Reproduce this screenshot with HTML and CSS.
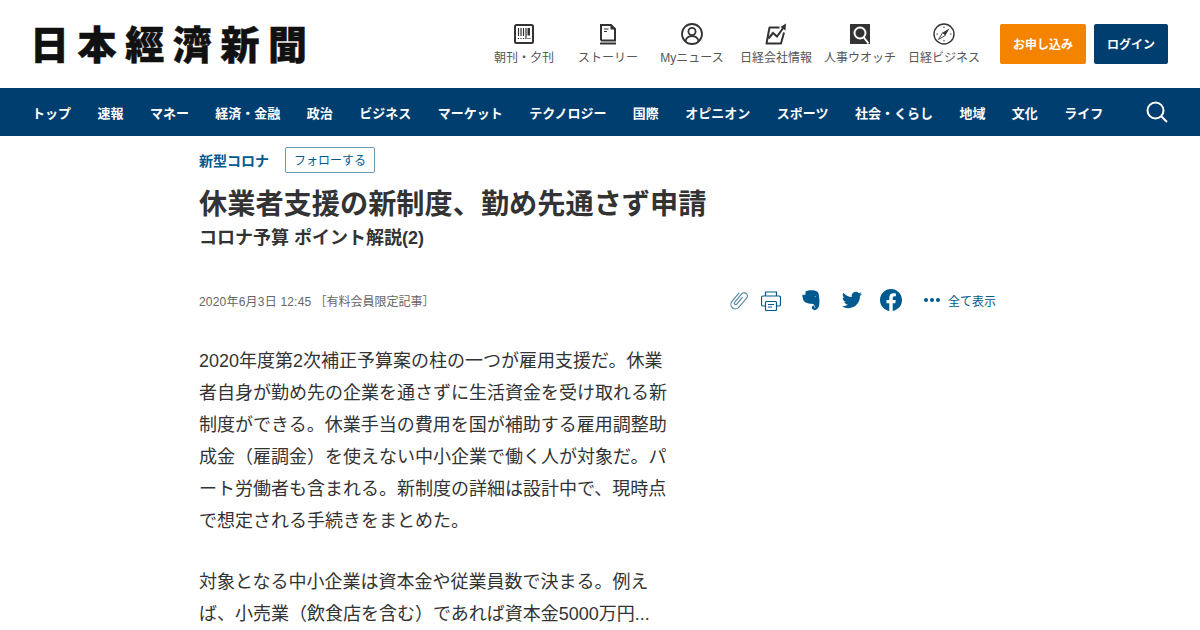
FILE: index.html
```html
<!DOCTYPE html>
<html lang="ja">
<head>
    <meta charset="UTF-8">
    <title>休業者支援の新制度、勤め先通さず申請</title>
    <link rel="stylesheet" href="styles.css">
</head>
<body>
    <header class="site-header">
        <a class="logo" href="#">日本經濟新聞</a>
        <ul class="service-list">
            <li class="service-item">
                <svg class="service-icon" viewBox="0 0 22 22"><rect x="2" y="2" width="18" height="18" rx="1.500" fill="none" stroke="#333" stroke-width="2"/><path d="M5.500 5v8M8 5v8M10.500 5v8M13 5v11M5.500 15v1M8 15v1M10.500 15v1M15 15v1M17 15v1" stroke="#333" stroke-width="1.200"/><rect x="14.500" y="5" width="2.500" height="7.500" fill="#333"/></svg>
                <span>朝刊・夕刊</span>
            </li>
            <li class="service-item">
                <svg class="service-icon" viewBox="0 0 22 22"><path d="M4 17.500V2h10l4 4v11.500H4" fill="none" stroke="#333" stroke-width="2"/><path d="M3 20.500h16" stroke="#333" stroke-width="2"/><path d="M13.500 1.500l5 5h-5z" fill="#333"/><path d="M7 6h4.500M7 8.500h3" stroke="#333" stroke-width="1.200"/></svg>
                <span>ストーリー</span>
            </li>
            <li class="service-item">
                <svg class="service-icon" viewBox="0 0 22 22"><circle cx="11" cy="11" r="10" fill="none" stroke="#333" stroke-width="1.800"/><circle cx="11" cy="8.500" r="3.600" fill="none" stroke="#333" stroke-width="1.800"/><path d="M4.500 18c1-3.500 3.500-4.800 6.500-4.800s5.500 1.300 6.500 4.800" fill="none" stroke="#333" stroke-width="1.800"/></svg>
                <span>Myニュース</span>
            </li>
            <li class="service-item">
                <svg class="service-icon" viewBox="0 0 22 22"><path d="M14.500 4.500H4.500L1.500 20.500h14.500l3-11" fill="none" stroke="#333" stroke-width="2" stroke-linejoin="round"/><path d="M3.500 15.500l4.500-5.500 4 3.500 6.500-9" fill="none" stroke="#333" stroke-width="2"/><path d="M21 .500l-.5 7-5-3.500z" fill="#333"/></svg>
                <span>日経会社情報</span>
            </li>
            <li class="service-item">
                <svg class="service-icon" viewBox="0 0 22 22"><rect x="1" y="1" width="20" height="20" fill="#333"/><circle cx="11" cy="10" r="5.500" fill="none" stroke="#fff" stroke-width="2"/><path d="M14.500 14l5 6.500" stroke="#fff" stroke-width="2"/></svg>
                <span>人事ウオッチ</span>
            </li>
            <li class="service-item">
                <svg class="service-icon" viewBox="0 0 22 22"><circle cx="11" cy="11" r="10" fill="none" stroke="#333" stroke-width="1.400"/><path d="M16.500 5.500l-4 6.800-2.800-2.800z" fill="#333"/><path d="M5.500 16.500l4.200-7 2.800 2.800z" fill="none" stroke="#333" stroke-width=".9"/><path d="M11 3.500v1.500M11 17v1.500M3.500 11H5M17 11h1.500" stroke="#333"/></svg>
                <span>日経ビジネス</span>
            </li>
        </ul>
        <div class="header-buttons">
            <a class="btn btn-apply" href="#">お申し込み</a>
            <a class="btn btn-login" href="#">ログイン</a>
        </div>
    </header>

    <nav class="global-nav">
        <ul class="nav-list">
            <li>トップ</li>
            <li>速報</li>
            <li>マネー</li>
            <li>経済・金融</li>
            <li>政治</li>
            <li>ビジネス</li>
            <li>マーケット</li>
            <li>テクノロジー</li>
            <li>国際</li>
            <li>オピニオン</li>
            <li>スポーツ</li>
            <li>社会・くらし</li>
            <li>地域</li>
            <li>文化</li>
            <li>ライフ</li>
        </ul>
        <svg class="nav-search" viewBox="0 0 22 22"><circle cx="9.500" cy="9.500" r="8" fill="none" stroke="#fff" stroke-width="2"/><path d="M15.500 15.500L21 21" stroke="#fff" stroke-width="2"/></svg>
    </nav>

    <main class="article">
        <div class="topic-row">
            <a class="topic-name" href="#">新型コロナ</a>
            <button class="follow-btn">フォローする</button>
        </div>
        <h1 class="article-title">休業者支援の新制度、勤め先通さず申請</h1>
        <h2 class="article-sub">コロナ予算 ポイント解説(2)</h2>
        <div class="meta-row">
            <div class="meta-date">2020年6月3日 12:45<span class="meta-note">［有料会員限定記事］</span></div>
            <div class="share-tools">
                <svg class="tool-clip" viewBox="0 0 24 24"><path transform="rotate(40 12 12) translate(4 0)" d="M3 6v12a5 5 0 0 0 10 0V5a3.500 3.500 0 0 0-7 0v12a1.500 1.500 0 0 0 3 0V7" fill="none" stroke="#5a8aa8" stroke-width="1.300"/></svg>
                <svg class="tool-print" viewBox="0 0 20 20"><path d="M4.500 5V1h11v4M4 15H2a1.500 1.500 0 0 1-1.500-1.500v-7A1.500 1.500 0 0 1 2 5h16a1.500 1.500 0 0 1 1.500 1.500v7A1.500 1.500 0 0 1 18 15h-2" fill="none" stroke="#005a8f" stroke-width="1.200"/><rect x="4.500" y="10.500" width="11" height="9" rx="1" fill="none" stroke="#005a8f" stroke-width="1.200"/><path d="M7 13.500h6M7 16h4" stroke="#005a8f" stroke-width="1.100"/></svg>
                <svg class="tool-evernote" viewBox="0 0 18 20"><path d="M3.500 1.600C5.500.2 9.500-.2 12.500.4c2.500.5 3.700 1.600 4.200 3.800.7 3.300.9 7.300.6 10-.3 3-1.700 5.300-4 5.700-2 .3-3.500-.7-3.500-2.300 0-1.500 1.200-2.300 2.700-2.100.8.100 1.300.5 1.300.9-.9-1.300-2.300-2.300-4.300-2.600C6 13.400 2.500 13 1.300 10 .6 8.200.4 6.500.4 4.800h3.100z" fill="#005a8f"/><path d="M12.300 6.300c.7-.2 1.500 0 1.800.6-.7.100-1.300 0-1.800-.6z" fill="#fff"/><path d="M11.800 16.500c1 .1 1.400.7 1.200 1.300" fill="none" stroke="#fff" stroke-width=".8"/></svg>
                <svg class="tool-twitter" viewBox="0 0 24 24"><path d="M23.953 4.57a10 10 0 01-2.825.775 4.958 4.958 0 002.163-2.723c-.951.555-2.005.959-3.127 1.184a4.92 4.920 0 00-8.384 4.482C7.690 8.095 4.067 6.130 1.640 3.162a4.822 4.822 0 00-.666 2.475c0 1.710.870 3.213 2.188 4.096a4.904 4.904 0 01-2.228-.616v.06a4.923 4.923 0 003.946 4.827 4.996 4.996 0 01-2.212.085 4.936 4.936 0 004.604 3.417 9.867 9.867 0 01-6.102 2.105c-.390 0-.779-.023-1.170-.067a13.995 13.995 0 007.557 2.209c9.053 0 13.998-7.496 13.998-13.985 0-.210 0-.420-.015-.630A9.935 9.935 0 0024 4.590z" fill="#005a8f"/></svg>
                <svg class="tool-facebook" viewBox="0 0 24 24"><path d="M24 12.073c0-6.627-5.373-12-12-12s-12 5.373-12 12c0 5.990 4.388 10.954 10.125 11.854v-8.385H7.078v-3.470h3.047V9.430c0-3.007 1.792-4.669 4.533-4.669 1.312 0 2.686.235 2.686.235v2.953H15.830c-1.491 0-1.956.925-1.956 1.874v2.250h3.328l-.532 3.470h-2.796v8.385C19.612 23.027 24 18.062 24 12.073z" fill="#005a8f"/></svg>
                <div class="show-all">
                    <span class="dots"><i></i><i></i><i></i></span>
                    <span>全て表示</span>
                </div>
            </div>
        </div>
        <div class="article-body">
            <p>2020年度第2次補正予算案の柱の一つが雇用支援だ。休業者自身が勤め先の企業を通さずに生活資金を受け取れる新制度ができる。休業手当の費用を国が補助する雇用調整助成金（雇調金）を使えない中小企業で働く人が対象だ。パート労働者も含まれる。新制度の詳細は設計中で、現時点で想定される手続きをまとめた。</p>
            <p>対象となる中小企業は資本金や従業員数で決まる。例えば、小売業（飲食店を含む）であれば資本金5000万円...</p>
        </div>
    </main>
</body>
</html>
```

FILE: styles.css
```css
* {
    box-sizing: border-box;
}
body {
    margin: 0;
    font-family: "Liberation Sans", "Noto Sans CJK JP", sans-serif;
    color: #333;
    background-color: #fff;
}
ul {
    list-style-type: none;
    margin: 0;
    padding: 0;
}
a {
    text-decoration: none;
}
.site-header {
    display: flex;
    align-items: center;
    height: 88px;
    padding: 0 32px 0 30px;
}
.logo {
    width: 280px;
    margin-bottom: 3px;
    font-family: "Noto Sans CJK JP", sans-serif;
    font-size: 39px;
    font-weight: 900;
    line-height: 1;
    letter-spacing: 8.6px;
    white-space: nowrap;
    color: #111;
    -webkit-text-stroke: 0.5px #111;
}
.service-list {
    display: flex;
    margin-left: auto;
}
.service-item {
    display: flex;
    flex-direction: column;
    align-items: center;
    width: 84px;
    font-size: 12px;
    color: #555;
}
.service-icon {
    width: 22px;
    height: 22px;
    margin-bottom: 3px;
}
.header-buttons {
    display: flex;
    gap: 8px;
    margin-left: 14px;
}
.btn {
    display: flex;
    align-items: center;
    justify-content: center;
    height: 40px;
    padding-bottom: 1px;
    border-radius: 2px;
    font-size: 12px;
    font-weight: bold;
    color: #fff;
}
.btn-apply {
    width: 86px;
    background-color: #f48400;
}
.btn-login {
    width: 74px;
    background-color: #003e70;
}
.global-nav {
    display: flex;
    align-items: center;
    justify-content: space-between;
    height: 48px;
    padding: 0 32px;
    background-color: #003e70;
}
.nav-list {
    display: flex;
    gap: 26.45px;
    font-size: 13px;
    font-weight: bold;
    color: #fff;
}
.nav-search {
    width: 22px;
    height: 22px;
}
.article {
    width: 797px;
    margin-left: 199px;
}
.topic-row {
    display: flex;
    align-items: center;
    gap: 16px;
    margin-top: 11px;
}
.topic-name {
    margin-bottom: 1px;
    font-size: 14px;
    font-weight: bold;
    color: #005a8f;
}
.follow-btn {
    height: 26px;
    width: 90px;
    padding: 0 0 1px;
    border: 1px solid #6f9ab5;
    border-radius: 2px;
    background: #fff;
    font-family: inherit;
    font-size: 12px;
    color: #005a8f;
}
.article-title {
    margin: 12px 0 0;
    font-size: 28.2px;
    line-height: 38px;
    font-weight: bold;
    color: #333;
}
.article-sub {
    margin: 2px 0 0;
    font-size: 18px;
    line-height: 26px;
    font-weight: bold;
    color: #333;
}
.meta-row {
    display: flex;
    align-items: center;
    justify-content: space-between;
    height: 24px;
    margin-top: 37px;
}
.meta-date {
    font-size: 12px;
    letter-spacing: 0.2px;
    color: #666;
}
.meta-note {
    margin-left: 3px;
    letter-spacing: 0;
}
.share-tools {
    display: flex;
    align-items: center;
}
.share-tools svg {
    display: block;
}
.tool-clip {
    width: 22px;
    height: 22px;
}
.tool-print {
    width: 20px;
    height: 20px;
    margin-left: 11px;
    margin-top: 1px;
}
.tool-evernote {
    width: 18px;
    height: 20px;
    margin-left: 21px;
}
.tool-twitter {
    width: 20px;
    height: 20px;
    margin-left: 22px;
}
.tool-facebook {
    width: 22px;
    height: 22px;
    margin-left: 18px;
}
.show-all {
    display: flex;
    align-items: center;
    gap: 8px;
    margin-left: 22px;
    font-size: 12px;
    color: #005a8f;
}
.dots {
    display: flex;
    gap: 2px;
}
.dots i {
    width: 4px;
    height: 4px;
    border-radius: 50%;
    background-color: #005a8f;
}
.article-body {
    width: 469px;
    margin-top: 33px;
    font-size: 18px;
    line-height: 32px;
    color: #333;
}
.article-body p {
    margin: 0 0 29px;
}
```
